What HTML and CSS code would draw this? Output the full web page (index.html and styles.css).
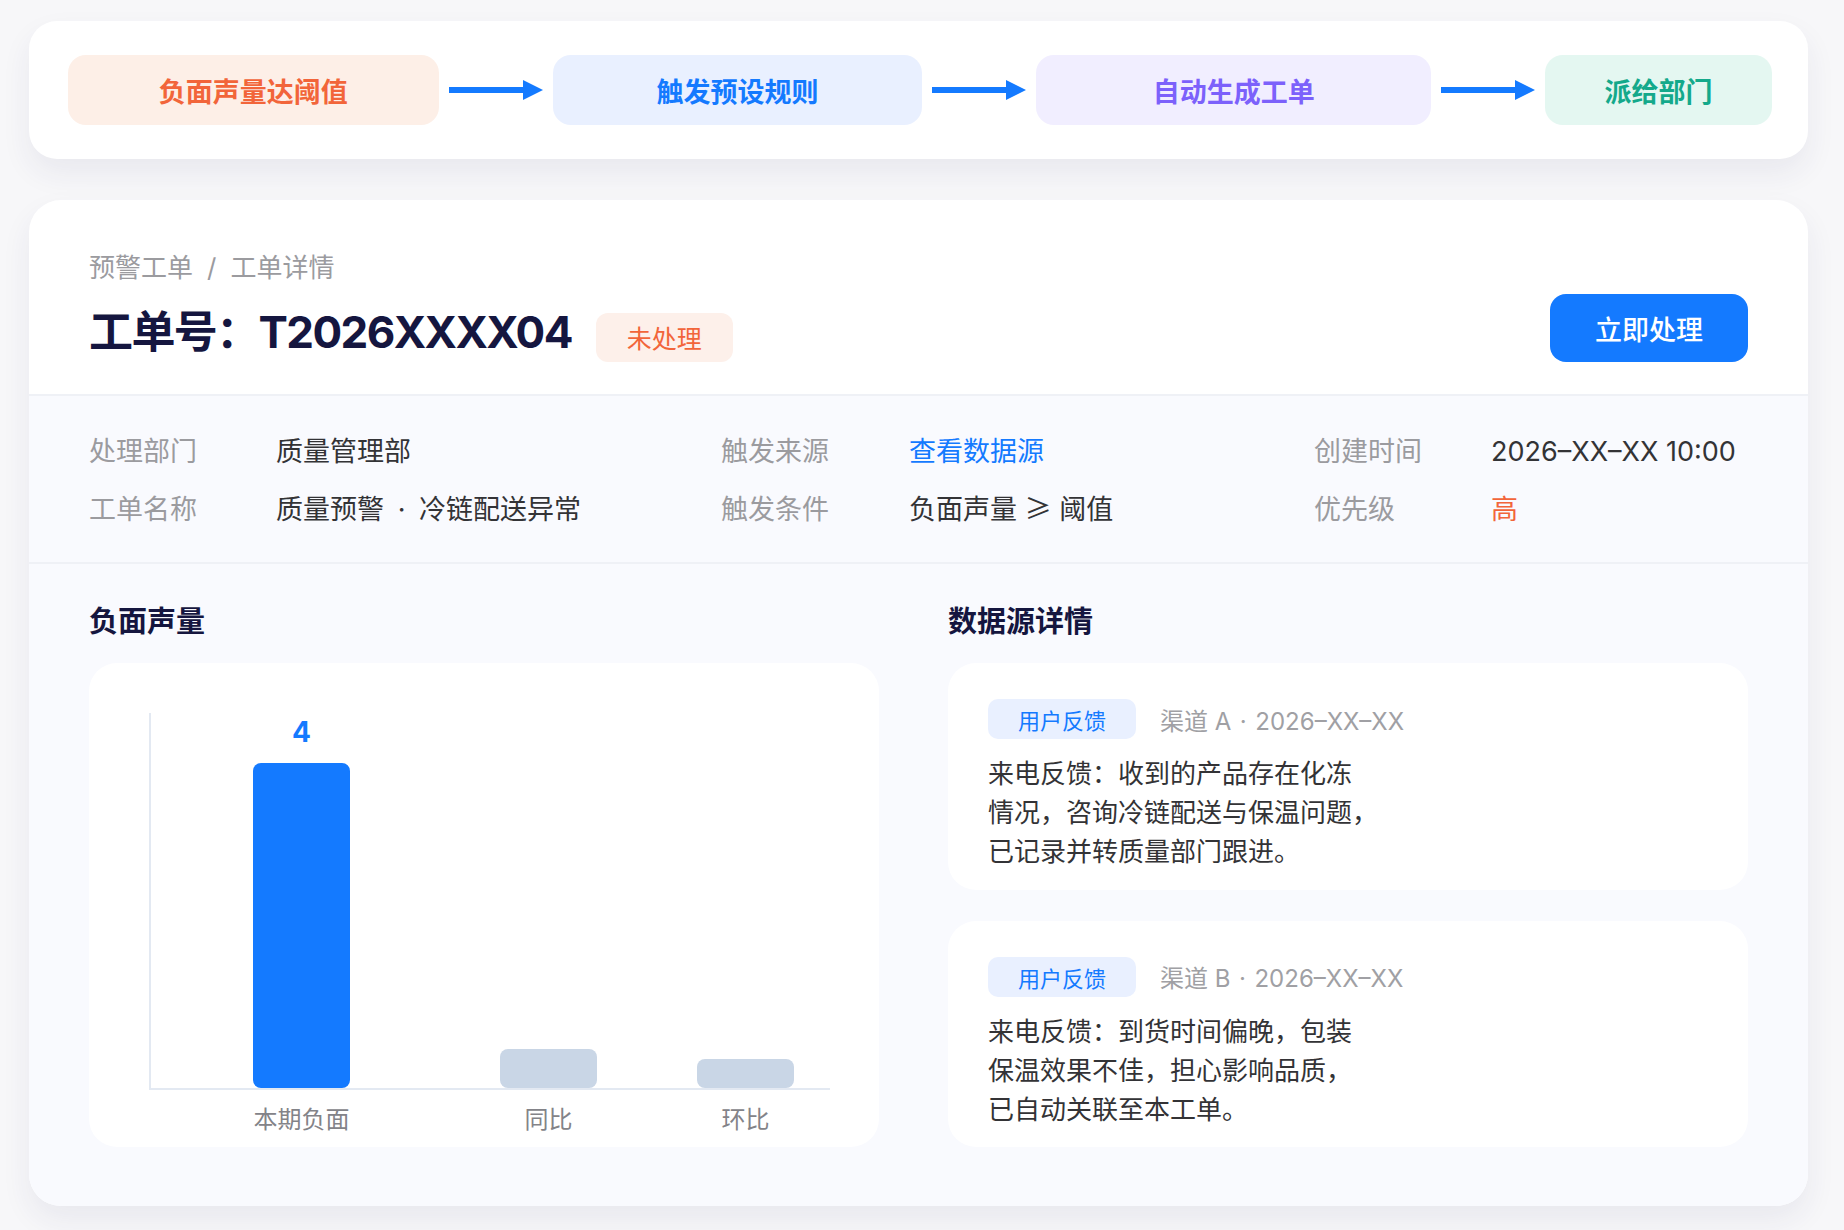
FILE: index.html
```html
<!DOCTYPE html>
<html lang="zh-CN">
<head>
<meta charset="utf-8">
<title>工单详情</title>
<link rel="stylesheet" href="styles.css">
</head>
<body>
<div class="page">
  <section class="flow">
    <div class="step step-orange">负面声量达阈值</div>
    <svg class="arrow" viewBox="0 0 94 20" aria-hidden="true"><rect x="0" y="7" width="76" height="6" fill="#147aff"/><polygon points="74,0 94,10 74,20" fill="#147aff"/></svg>
    <div class="step step-blue">触发预设规则</div>
    <svg class="arrow" viewBox="0 0 94 20" aria-hidden="true"><rect x="0" y="7" width="76" height="6" fill="#147aff"/><polygon points="74,0 94,10 74,20" fill="#147aff"/></svg>
    <div class="step step-purple">自动生成工单</div>
    <svg class="arrow" viewBox="0 0 94 20" aria-hidden="true"><rect x="0" y="7" width="76" height="6" fill="#147aff"/><polygon points="74,0 94,10 74,20" fill="#147aff"/></svg>
    <div class="step step-teal">派给部门</div>
  </section>

  <main class="detail">
    <header class="detail-head">
      <div class="head-main">
        <div class="crumb">预警工单<span class="sep">/</span>工单详情</div>
        <div class="title-row">
          <h1 class="title">工单号：T2026XXXX04</h1>
          <span class="badge">未处理</span>
        </div>
      </div>
      <button class="primary" type="button">立即处理</button>
    </header>

    <section class="info">
      <div class="label">处理部门</div>
      <div class="value">质量管理部</div>
      <div class="label">触发来源</div>
      <div class="value link">查看数据源</div>
      <div class="label">创建时间</div>
      <div class="value">2026–XX–XX 10:00</div>
      <div class="label">工单名称</div>
      <div class="value">质量预警<span class="dot">·</span>冷链配送异常</div>
      <div class="label">触发条件</div>
      <div class="value">负面声量 <span class="sym">≥</span> 阈值</div>
      <div class="label">优先级</div>
      <div class="value high">高</div>
    </section>

    <section class="panels">
      <div class="panel">
        <h2 class="panel-title">负面声量</h2>
        <div class="chart-card">
          <div class="plot">
            <div class="col">
              <div class="bar-value">4</div>
              <div class="bar bar-main" style="height:325px"></div>
            </div>
            <div class="col col-2">
              <div class="bar bar-muted" style="height:39px"></div>
            </div>
            <div class="col col-3">
              <div class="bar bar-muted" style="height:29px"></div>
            </div>
          </div>
          <div class="xaxis">
            <div class="col">本期负面</div>
            <div class="col col-2">同比</div>
            <div class="col col-3">环比</div>
          </div>
        </div>
      </div>

      <div class="panel">
        <h2 class="panel-title">数据源详情</h2>
        <div class="sources">
          <article class="source">
            <div class="source-head">
              <span class="tag">用户反馈</span>
              <span class="meta">渠道 A<span class="dot">·</span>2026–XX–XX</span>
            </div>
            <p class="source-text">来电反馈：收到的产品存在化冻<br>情况，咨询冷链配送与保温问题，<br>已记录并转质量部门跟进。</p>
          </article>
          <article class="source">
            <div class="source-head">
              <span class="tag">用户反馈</span>
              <span class="meta">渠道 B<span class="dot">·</span>2026–XX–XX</span>
            </div>
            <p class="source-text">来电反馈：到货时间偏晚，包装<br>保温效果不佳，担心影响品质，<br>已自动关联至本工单。</p>
          </article>
        </div>
      </div>
    </section>
  </main>
</div>
</body>
</html>
```

FILE: styles.css
```css
* { box-sizing: border-box; }

html, body {
  margin: 0;
  padding: 0;
  background: #f7f7f9;
}

body {
  font-family: Inter, "Noto Sans CJK SC", sans-serif;
  color: #2f2f33;
}

.page {
  padding: 21px 36px 24px 29px;
  display: flex;
  flex-direction: column;
  gap: 41px;
}

/* ---------- flow ---------- */
.flow {
  background: #fff;
  border-radius: 28px;
  height: 138px;
  padding: 34px 36px 34px 39px;
  display: grid;
  grid-template-columns: 371fr 94px 370fr 94px 395fr 94px 227fr;
  column-gap: 10px;
  align-items: center;
  box-shadow: 0 14px 30px rgba(40, 48, 100, 0.07);
}

.step {
  height: 70px;
  border-radius: 18px;
  display: flex;
  align-items: center;
  justify-content: center;
  font-size: 27px;
  font-weight: 700;
  font-family: "Noto Sans CJK SC", sans-serif;
}

.step-orange { background: #fdefe7; color: #f2653a; }
.step-blue   { background: #e9f0ff; color: #147aff; }
.step-purple { background: #f1eeff; color: #7c61fb; }
.step-teal   { background: #e4f7f1; color: #14a98b; }

.arrow {
  width: 94px;
  height: 20px;
  display: block;
}

/* ---------- detail card ---------- */
.detail {
  background: #fff;
  border-radius: 32px;
  overflow: hidden;
  box-shadow: 0 14px 30px rgba(40, 48, 100, 0.07);
}

.detail-head {
  padding: 50px 60px 32px;
  display: flex;
  justify-content: space-between;
  align-items: flex-end;
  border-bottom: 2px solid #eff1f6;
}

.crumb {
  font-size: 26px;
  line-height: 36px;
  color: #9b9b9f;
}

.crumb .sep {
  margin: 0 14px;
}

.title-row {
  margin-top: 16px;
  display: flex;
  align-items: flex-end;
  gap: 24px;
}

.title {
  margin: 0;
  font-size: 44px;
  line-height: 60px;
  font-weight: 700;
  color: #15163f;
  letter-spacing: -1.6px;
}

.badge {
  height: 49px;
  padding: 0 31px;
  border-radius: 12px;
  background: #fdf0ea;
  color: #f2653a;
  font-size: 25px;
  line-height: 49px;
  font-family: "Noto Sans CJK SC", sans-serif;
}

.primary {
  width: 198px;
  height: 68px;
  border: none;
  border-radius: 16px;
  background: #147aff;
  color: #fff;
  font-family: "Noto Sans CJK SC", sans-serif;
  font-size: 27px;
  font-weight: 500;
  cursor: pointer;
}

/* ---------- info ---------- */
.info {
  background: #f9fafe;
  border-bottom: 2px solid #eff1f6;
  padding: 36px 60px 32px;
  display: grid;
  grid-template-columns: 187px 445px 188px 405px 177px 1fr;
  grid-auto-rows: 40px;
  row-gap: 18px;
  font-size: 27px;
  line-height: 40px;
}

.label { color: #9b9b9f; }
.value { color: #333336; }
.value.link { color: #147aff; }
.value.high { color: #f2653a; }

.sym {
  font-family: "Noto Sans CJK SC", sans-serif;
  line-height: 1;
}

.dot {
  display: inline-block;
  width: 1.3em;
  text-align: center;
}

/* ---------- panels ---------- */
.panels {
  background: #f9fafe;
  padding: 35px 60px 59px;
  display: grid;
  grid-template-columns: 790px 800px;
  column-gap: 69px;
}

.panel {
  display: flex;
  flex-direction: column;
}

.panel-title {
  margin: 0 0 24px;
  font-family: "Noto Sans CJK SC", sans-serif;
  font-size: 29px;
  line-height: 40px;
  font-weight: 700;
  color: #15163f;
}

.chart-card {
  background: #fff;
  border-radius: 28px;
  height: 484px;
  padding: 50px 49px 12px 60px;
}

.plot {
  height: 377px;
  border-left: 2px solid #e3e9f2;
  border-bottom: 2px solid #e3e9f2;
  padding-left: 102px;
  display: flex;
  align-items: flex-end;
}

.col {
  width: 97px;
  flex: none;
  display: flex;
  flex-direction: column;
  align-items: center;
  justify-content: flex-end;
}

.col-2 { margin-left: 150px; }
.col-3 { margin-left: 100px; }

.bar-value {
  font-size: 28px;
  line-height: 32px;
  font-weight: 700;
  color: #147aff;
  margin-bottom: 15px;
}

.bar {
  width: 97px;
  border-radius: 8px;
}

.bar-main  { background: #147aff; }
.bar-muted { background: #c9d6e6; }

.xaxis {
  margin-top: 15px;
  padding-left: 104px;
  display: flex;
  font-size: 24px;
  line-height: 30px;
  color: #838388;
  white-space: nowrap;
}

.sources {
  display: flex;
  flex-direction: column;
  gap: 31px;
  height: 484px;
}

.source {
  flex: 1;
  background: #fff;
  border-radius: 28px;
  padding: 36px 40px 0;
}

.source-head {
  display: flex;
  align-items: center;
  gap: 24px;
}

.tag {
  height: 40px;
  line-height: 40px;
  padding: 0 30px;
  border-radius: 10px;
  background: #e9f0ff;
  color: #147aff;
  font-size: 22px;
  font-family: "Noto Sans CJK SC", sans-serif;
}

.meta {
  font-size: 24px;
  color: #a0a0a4;
}

.meta .dot { width: 1em; }

.source-text {
  margin: 15px 0 0;
  font-size: 26px;
  line-height: 39px;
  color: #333336;
}
```
